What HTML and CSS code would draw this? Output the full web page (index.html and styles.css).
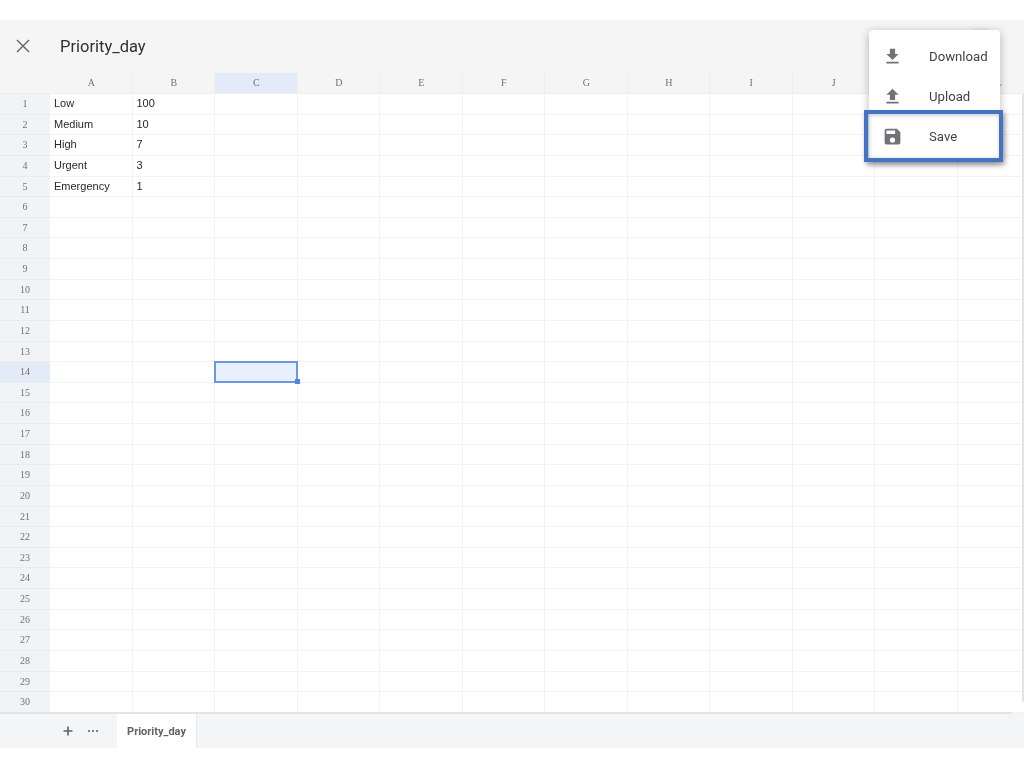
FILE: index.html
```html
<!DOCTYPE html>
<html lang="en">
<head>
<meta charset="utf-8">
<title>Priority_day</title>
<link rel="stylesheet" href="styles.css">
</head>
<body>
<div class="page">
  <header class="topbar">
    <svg class="close" viewBox="0 0 14 14" width="14" height="14"><path d="M1 1l12 12M13 1L1 13"/></svg>
    <h1 class="title">Priority_day</h1>
    <span class="avatar"></span>
  </header>
  <div class="colheads">
    <div class="corner"></div>
    <div class="ch">A</div><div class="ch">B</div><div class="ch active">C</div><div class="ch">D</div><div class="ch">E</div><div class="ch">F</div><div class="ch">G</div><div class="ch">H</div><div class="ch">I</div><div class="ch">J</div><div class="ch">K</div><div class="ch">L</div>
  </div>
  <div class="grid">
    <div class="rownums">
      <div class="rn">1</div><div class="rn">2</div><div class="rn">3</div><div class="rn">4</div><div class="rn">5</div><div class="rn">6</div><div class="rn">7</div><div class="rn">8</div><div class="rn">9</div><div class="rn">10</div>
      <div class="rn">11</div><div class="rn">12</div><div class="rn">13</div><div class="rn active">14</div><div class="rn">15</div><div class="rn">16</div><div class="rn">17</div><div class="rn">18</div><div class="rn">19</div><div class="rn">20</div>
      <div class="rn">21</div><div class="rn">22</div><div class="rn">23</div><div class="rn">24</div><div class="rn">25</div><div class="rn">26</div><div class="rn">27</div><div class="rn">28</div><div class="rn">29</div><div class="rn">30</div>
    </div>
    <div class="cells">
      <div class="row"><div class="cell">Low</div><div class="cell">100</div></div>
      <div class="row"><div class="cell">Medium</div><div class="cell">10</div></div>
      <div class="row"><div class="cell">High</div><div class="cell">7</div></div>
      <div class="row"><div class="cell">Urgent</div><div class="cell">3</div></div>
      <div class="row"><div class="cell">Emergency</div><div class="cell">1</div></div>
      <div class="selected"><span class="handle"></span></div>
    </div>
    <div class="scrollbar"></div>
    <div class="hbar"></div>
  </div>
  <footer class="tabs">
    <svg class="plus" viewBox="0 0 10 10" width="10" height="10"><path d="M5 .5v9M.5 5h9"/></svg>
    <svg class="dots" viewBox="0 0 12 4" width="12" height="4"><circle cx="2" cy="2" r="1.1"/><circle cx="6" cy="2" r="1.1"/><circle cx="10" cy="2" r="1.1"/></svg>
    <div class="tab">Priority_day</div>
  </footer>
  <nav class="menu">
    <div class="item">
      <svg viewBox="0 0 24 24" width="21" height="21"><path d="M19 9h-4V3H9v6H5l7 7 7-7zM5 18v2h14v-2H5z"/></svg>
      <span>Download</span>
    </div>
    <div class="item">
      <svg viewBox="0 0 24 24" width="21" height="21"><path d="M9 16h6v-6h4l-7-7-7 7h4v6zm-4 2h14v2H5v-2z"/></svg>
      <span>Upload</span>
    </div>
    <div class="item save">
      <svg viewBox="0 0 24 24" width="21" height="21"><path d="M17 3H5a2 2 0 0 0-2 2v14a2 2 0 0 0 2 2h14a2 2 0 0 0 2-2V7l-4-4zm-5 16a3 3 0 1 1 0-6 3 3 0 0 1 0 6zm3-10H5V5h10v4z"/></svg>
      <span>Save</span>
    </div>
  </nav>
  <div class="highlight"></div>
</div>
</body>
</html>
```
FILE: styles.css
```css
* { box-sizing: border-box; }
html, body { margin: 0; padding: 0; background: #fff; }
.page {
  position: relative;
  width: 1024px;
  height: 768px;
  padding-top: 20px;
  overflow: hidden;
  font-family: "Liberation Sans", Arial, sans-serif;
  will-change: transform;
}
.topbar {
  display: flex;
  align-items: center;
  height: 53px;
  background: #f5f5f6;
  padding-left: 16px;
  padding-bottom: 1px;
  position: relative;
}
.close { flex: none; }
.close path { stroke: #5f6368; stroke-width: 1.4; fill: none; }
.title {
  margin: 0 0 0 30px;
  font: 400 16.5px Roboto, "Liberation Sans", sans-serif;
  color: #2f3133;
}
.avatar {
  position: absolute;
  left: 966px;
  top: 7px;
  width: 30px;
  height: 30px;
  border-radius: 50%;
  background: #ebebec;
}
.colheads {
  display: grid;
  grid-template-columns: 50px repeat(12, 82.5px);
  height: 20px;
  background: #f5f5f6;
}
.ch {
  padding-left: 1px;
  font: 10px/20px "Liberation Serif", serif;
  color: #6f7276;
  text-align: center;
  border-right: 1px solid #eceef0;
}
.ch.active { background: #e4ebf8; }
.grid {
  display: flex;
  position: relative;
  height: 621px;
  border-top: 1px solid #eceded;
  border-bottom: 2px solid #f3f3f5;
}
.rownums { flex: none; width: 50px; background: #f2f3f6; }
.rn {
  height: 20.63px;
  font: 10px/20.63px "Liberation Serif", serif;
  color: #6f7276;
  text-align: center;
  border-bottom: 1px solid #eaebed;
}
.rn.active { background: #e4ebf8; }
.cells {
  position: relative;
  flex: 1;
  background-color: #fff;
  background-image:
    repeating-linear-gradient(to right, transparent 0, transparent 81.5px, #f2f3f4 81.5px, #f2f3f4 82.5px),
    repeating-linear-gradient(to bottom, transparent 0, transparent 19.63px, #f2f3f4 19.63px, #f2f3f4 20.63px);
}
.row { display: grid; grid-template-columns: repeat(2, 82.5px); height: 20.63px; }
.cell {
  padding-left: 4px;
  font-size: 11px;
  line-height: 18px;
  color: #26282a;
}
.selected {
  position: absolute;
  left: 164px;
  top: 267px;
  width: 84px;
  height: 22px;
  background: #e8f0fe;
  border: 2px solid #6e97e0;
}
.handle {
  position: absolute;
  right: -4px;
  bottom: -3px;
  width: 5px;
  height: 5px;
  background: #4e83e4;
}
.scrollbar {
  position: absolute;
  right: 0;
  top: 0;
  bottom: 10px;
  width: 2px;
  background: #e4e4e6;
}
.hbar {
  position: absolute;
  left: 0;
  bottom: -2px;
  width: 1012px;
  height: 2px;
  background: #e3e4e6;
}
.tabs {
  display: flex;
  align-items: center;
  height: 34px;
  background: #f4f5f6;
  padding-left: 63px;
}
.plus path { stroke: #5f6368; stroke-width: 1.6; fill: none; }
.dots { margin-left: 14px; fill: #5f6368; }
.tab {
  margin-left: 18px;
  width: 80px;
  height: 100%;
  background: #fff;
  border-right: 1px solid #e9eaec;
  font: 700 11px/35px Roboto, "Liberation Sans", sans-serif;
  color: #5f6368;
  text-align: center;
}
.menu {
  position: absolute;
  left: 869px;
  top: 30px;
  width: 131px;
  height: 130px;
  padding-top: 6px;
  background: #fff;
  border-radius: 4px;
  box-shadow: 0 2px 10px rgba(0,0,0,.28);
}
.item {
  display: flex;
  align-items: center;
  height: 40px;
  padding-left: 13px;
  font: 400 13.2px Roboto, "Liberation Sans", sans-serif;
  color: #3f4245;
}
.item svg { flex: none; fill: #707276; }
.item span { margin-left: 26px; }
.highlight {
  position: absolute;
  left: 864px;
  top: 110px;
  width: 139px;
  height: 52px;
  border: 4px solid #4472c4;
  box-shadow: 2px 3px 5px rgba(0,0,0,.35), inset 1px 1px 4px rgba(0,0,0,.25);
}
```
